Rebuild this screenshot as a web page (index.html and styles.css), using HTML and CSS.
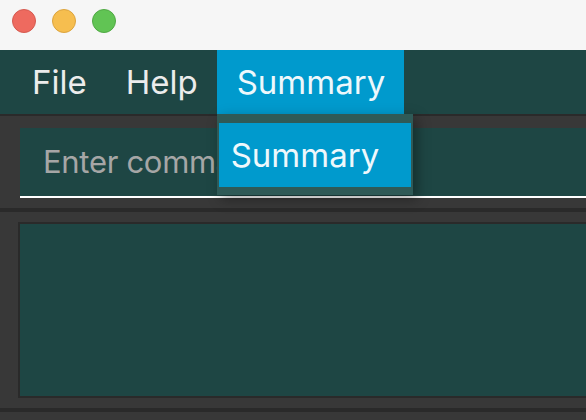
FILE: index.html
```html
<!DOCTYPE html>
<html>
<head>
<meta charset="utf-8">
<link rel="stylesheet" href="styles.css">
</head>
<body>
<div class="window">
  <div class="titlebar">
    <span class="light red"></span>
    <span class="light yellow"></span>
    <span class="light green"></span>
  </div>
  <div class="menubar">
    <div class="menu-item">File</div>
    <div class="menu-item">Help</div>
    <div class="menu-item active">Summary
      <div class="dropdown">
        <div class="dropdown-item">Summary</div>
      </div>
    </div>
  </div>
  <div class="content">
    <div class="command-pane">
      <div class="command-box"><span class="placeholder">Enter command here...</span></div>
    </div>
    <div class="divider"></div>
    <div class="result-pane">
      <div class="result-box"></div>
    </div>
    <div class="divider"></div>
    <div class="bottom-pane"></div>
  </div>
</div>
</body>
</html>
```
FILE: styles.css
```css
html, body {
  margin: 0;
  padding: 0;
}
body {
  width: 586px;
  height: 420px;
  overflow: hidden;
  background: #383838;
  font-family: Inter, Roboto, "Liberation Sans", sans-serif;
}
.window {
  display: flex;
  flex-direction: column;
  height: 420px;
}
.titlebar {
  height: 50px;
  background: #f6f6f6;
  display: flex;
  align-items: flex-start;
  gap: 16px;
  padding: 9px 0 0 12px;
  box-sizing: border-box;
  flex: none;
}
.light {
  width: 24px;
  height: 24px;
  border-radius: 50%;
  box-sizing: border-box;
}
.red { background: #ee6a5f; border: 1px solid #d55a50; }
.yellow { background: #f6be4f; border: 1px solid #dca43e; }
.green { background: #61c454; border: 1px solid #50a944; }
.menubar {
  height: 64px;
  background: #1e4644;
  display: flex;
  padding-left: 12px;
  flex: none;
  border-bottom: 2px solid #2a2a2a;
  position: relative;
  z-index: 2;
}
.menu-item {
  position: relative;
  padding: 0 19px 0 20px;
  line-height: 64px;
  font-size: 33px;
  color: #ececec;
}
.menu-item.active {
  background: #009acd;
  color: #eef8fc;
}
.dropdown {
  position: absolute;
  left: 0;
  top: 64px;
  width: 196px;
  height: 81px;
  box-sizing: border-box;
  padding: 9px 2px 0 2px;
  background: #2f5a57;
  box-shadow: 4px 4px 12px rgba(0,0,0,0.35);
}
.dropdown-item {
  height: 64px;
  line-height: 64px;
  padding-left: 12px;
  background: #009acd;
  color: #eef8fc;
  font-size: 33px;
}
.content {
  flex: 1;
  display: flex;
  flex-direction: column;
}
.command-pane {
  padding: 12px 0 10px 20px;
}
.command-box {
  height: 68px;
  line-height: 68px;
  background: #1e4644;
  border-bottom: 2px solid #ffffff;
  padding-left: 23px;
  font-size: 31px;
  letter-spacing: -0.3px;
  color: #a6a6a6;
}
.placeholder {
  display: block;
  width: 175px;
  white-space: nowrap;
  overflow: hidden;
}
.divider {
  height: 4px;
  background: #2a2a2a;
  flex: none;
}
.result-pane {
  padding: 10px 0 10px 18px;
}
.result-box {
  height: 172px;
  background: #1e4644;
  border: 2px solid #2a2a2a;
  border-right: none;
}
.bottom-pane {
  flex: 1;
}
```
